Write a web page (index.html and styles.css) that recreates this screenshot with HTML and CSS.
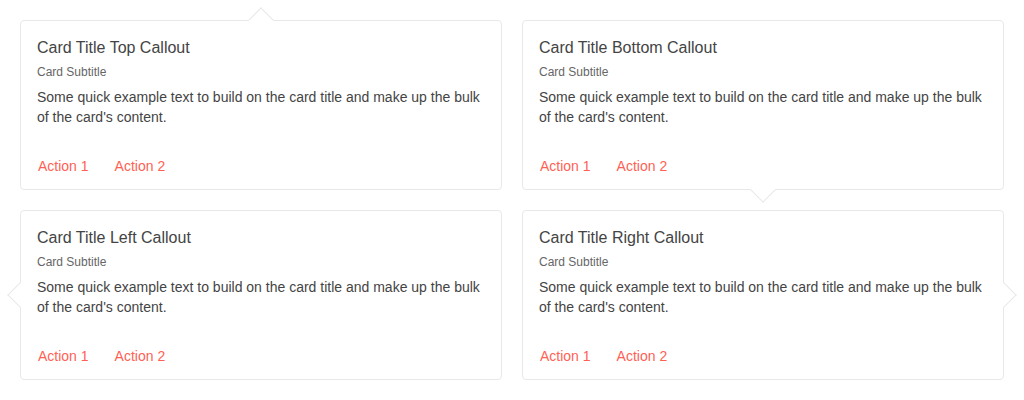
FILE: index.html
```html
<!DOCTYPE html>
<html>
<head>
<meta charset="utf-8">
<link rel="stylesheet" href="styles.css">
</head>
<body>
<div class="grid">
  <div class="card callout-top">
    <div class="title">Card Title Top Callout</div>
    <div class="subtitle">Card Subtitle</div>
    <div class="text">Some quick example text to build on the card title and make up the bulk of the card's content.</div>
    <div class="actions"><a class="action">Action 1</a><a class="action">Action 2</a></div>
  </div>
  <div class="card callout-bottom">
    <div class="title">Card Title Bottom Callout</div>
    <div class="subtitle">Card Subtitle</div>
    <div class="text">Some quick example text to build on the card title and make up the bulk of the card's content.</div>
    <div class="actions"><a class="action">Action 1</a><a class="action">Action 2</a></div>
  </div>
  <div class="card callout-left">
    <div class="title">Card Title Left Callout</div>
    <div class="subtitle">Card Subtitle</div>
    <div class="text">Some quick example text to build on the card title and make up the bulk of the card's content.</div>
    <div class="actions"><a class="action">Action 1</a><a class="action">Action 2</a></div>
  </div>
  <div class="card callout-right">
    <div class="title">Card Title Right Callout</div>
    <div class="subtitle">Card Subtitle</div>
    <div class="text">Some quick example text to build on the card title and make up the bulk of the card's content.</div>
    <div class="actions"><a class="action">Action 1</a><a class="action">Action 2</a></div>
  </div>
</div>
</body>
</html>
```
FILE: styles.css
```css
html, body {
  margin: 0;
  padding: 0;
  background: #fff;
}
body {
  font-family: "Liberation Sans", Arial, sans-serif;
  color: #444;
}
.grid {
  display: grid;
  grid-template-columns: 482px 482px;
  grid-auto-rows: 170px;
  gap: 20px;
  padding: 20px;
}
.card {
  position: relative;
  box-sizing: border-box;
  border: 1px solid #e8e8e8;
  border-radius: 4px;
  background: #fff;
  padding: 16px 16px 13px 16px;
  display: flex;
  flex-direction: column;
}
.card::before {
  content: "";
  position: absolute;
  width: 18px;
  height: 18px;
  background: #fff;
  border: 1px solid #e8e8e8;
  box-sizing: border-box;
  transform: rotate(45deg);
}
.callout-top::before {
  top: -10px;
  left: 231px;
  border-right: none;
  border-bottom: none;
}
.callout-bottom::before {
  bottom: -10px;
  left: 231px;
  border-left: none;
  border-top: none;
}
.callout-left::before {
  left: -10px;
  top: 75px;
  border-right: none;
  border-top: none;
}
.callout-right::before {
  right: -10px;
  top: 75px;
  border-left: none;
  border-bottom: none;
}
.title {
  font-size: 16px;
  line-height: 22px;
  color: #444;
}
.subtitle {
  font-size: 12px;
  line-height: 16px;
  color: #666;
  margin-top: 5px;
}
.text {
  font-size: 14px;
  line-height: 20px;
  color: #444;
  margin-top: 7px;
}
.actions {
  margin-top: auto;
  display: flex;
  gap: 26px;
  padding-left: 1px;
}
.action {
  font-size: 14px;
  line-height: 20px;
  color: #ff5f55;
}
```
